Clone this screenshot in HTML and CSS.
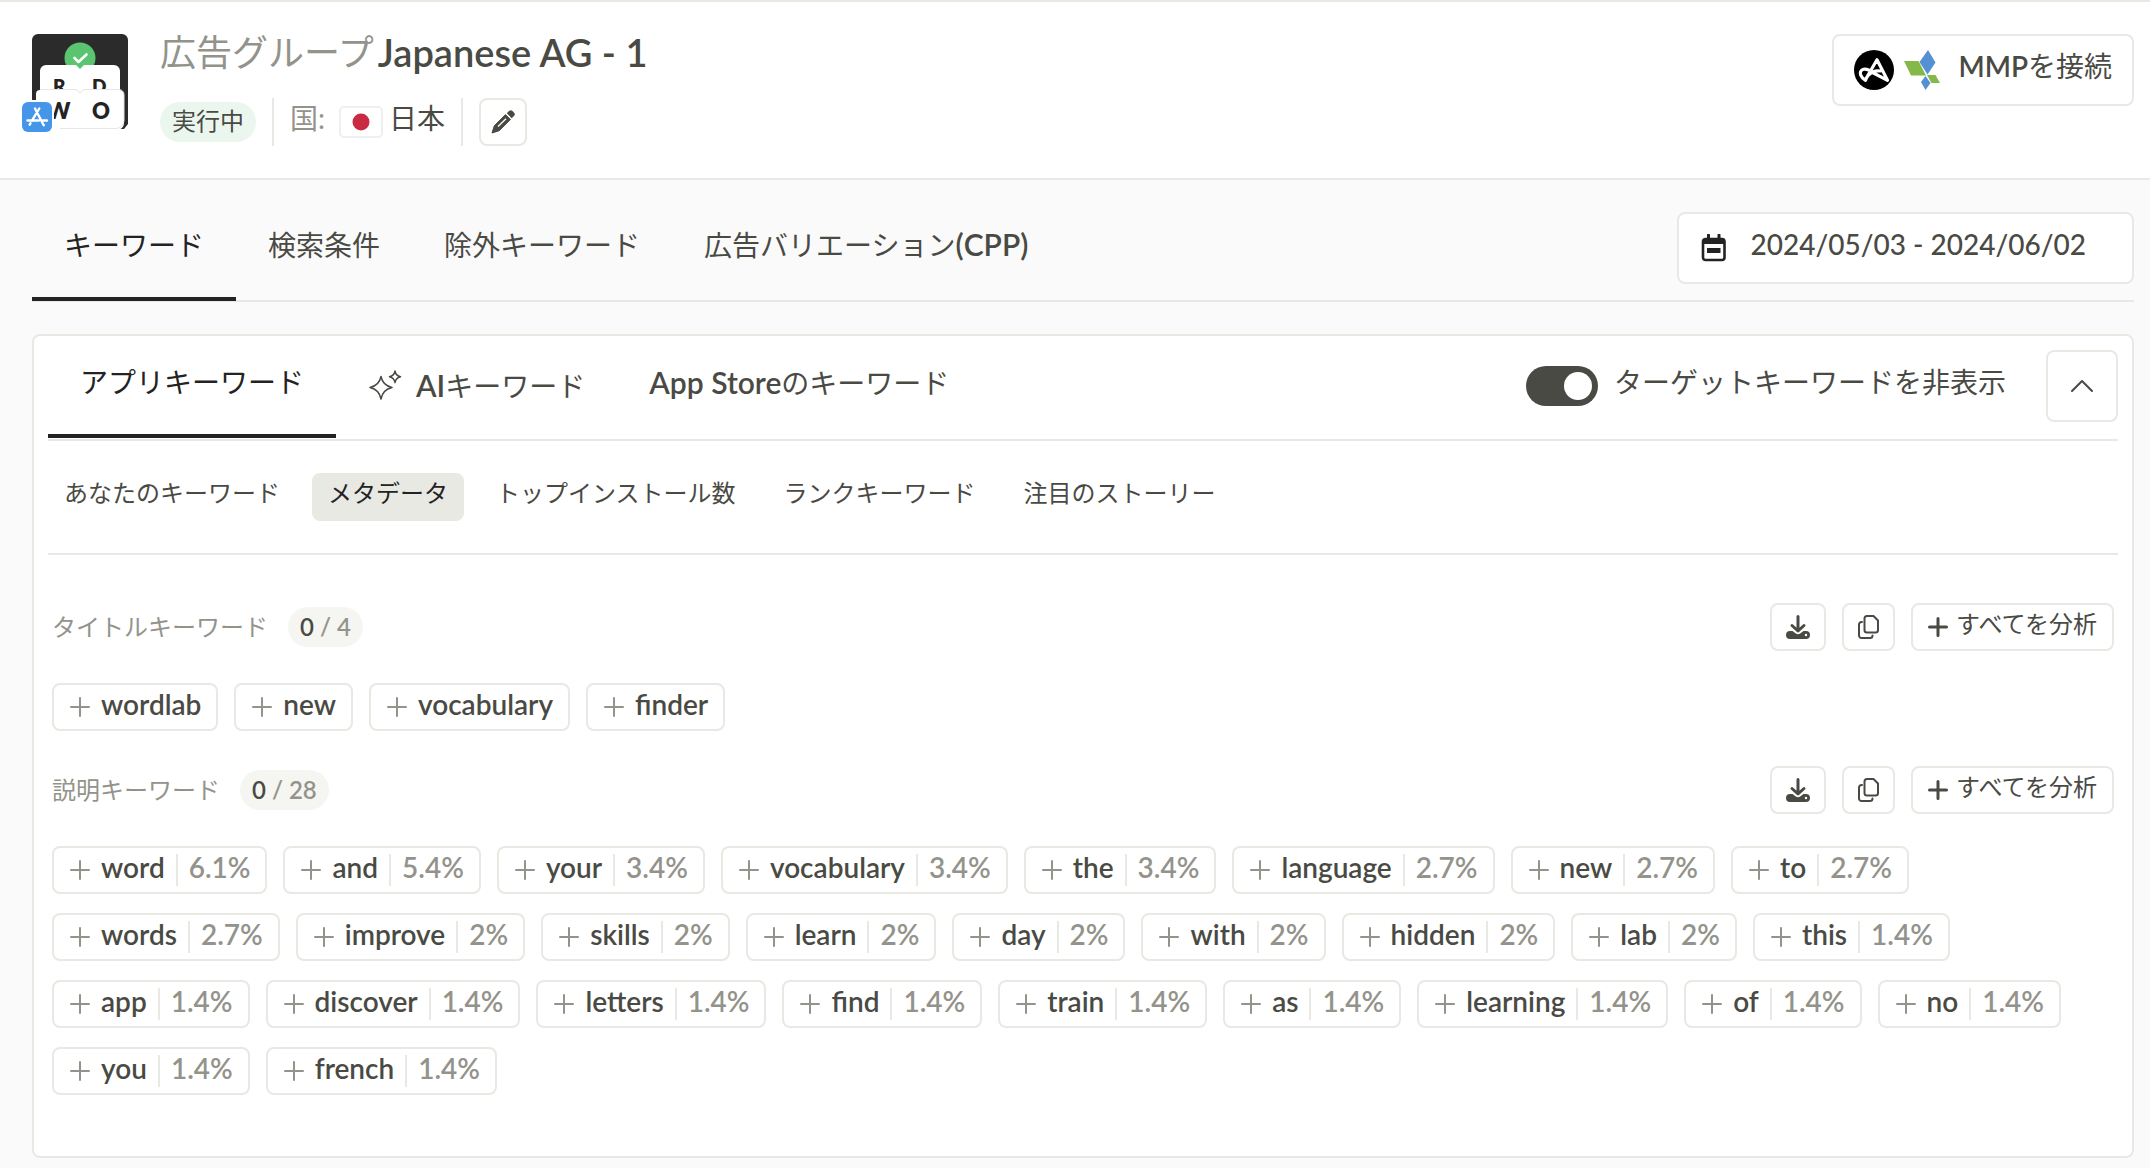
FILE: index.html
```html
<!DOCTYPE html>
<html lang="ja">
<head>
<meta charset="utf-8">
<meta name="viewport" content="width=device-width, initial-scale=1">
<title>広告グループ Japanese AG - 1</title>
<link rel="stylesheet" href="styles.css">
</head>
<body>
<svg class="sprite" aria-hidden="true">
  <symbol id="plus" viewBox="0 0 20 20"><path d="M10 1v18M1 10h18" fill="none" stroke="currentColor" stroke-width="2" stroke-linecap="round"/></symbol>
  <symbol id="plus-bold" viewBox="0 0 20 20"><path d="M10 1.500v17M1.500 10h17" fill="none" stroke="currentColor" stroke-width="3" stroke-linecap="round"/></symbol>
  <symbol id="download" viewBox="0 0 24 24"><path d="M4 16h2.500l3 2.200a4 4 0 0 0 5 0l3-2.200H20a4 4 0 0 1 0 8H4a4 4 0 0 1 0-8zM20 18.800a1.200 1.200 0 1 0 0 2.400 1.200 1.200 0 0 0 0-2.400z" fill="currentColor" fill-rule="evenodd"/><path d="M12 1.500v14M6 10.500l6 5.500 6-5.500" fill="none" stroke="currentColor" stroke-width="3" stroke-linecap="round" stroke-linejoin="round"/></symbol>
  <symbol id="copy" viewBox="0 0 21 24"><path d="M9 1h6.500L20 5.500V15a2.500 2.500 0 0 1-2.500 2.500H9A2.500 2.500 0 0 1 6.500 15V3.500A2.500 2.500 0 0 1 9 1zM4 7h-.5A2.500 2.500 0 0 0 1 9.500v11A2.500 2.500 0 0 0 3.500 23H12a2.500 2.500 0 0 0 2.500-2.500" fill="none" stroke="currentColor" stroke-width="2" stroke-linecap="round" stroke-linejoin="round"/></symbol>
</svg>

<header class="header">
  <div class="app">
    <svg class="app-icon" viewBox="0 0 96 96" aria-hidden="true">
      <path d="M6 0h84a6 6 0 0 1 6 6v84l-4 5H0V6a6 6 0 0 1 6-6z" fill="#2b2b2b"/>
      <circle cx="48" cy="24" r="15.500" fill="#5ac470"/>
      <path d="M42.500 24l4 4 8-7.500" fill="none" stroke="#fff" stroke-width="2.600" stroke-linecap="round" stroke-linejoin="round"/>
      <path d="M14 31h30l4 4 4-4h30a6 6 0 0 1 6 6v30H8V37a6 6 0 0 1 6-6z" fill="#fff"/>
      <g class="tile-text" fill="#232323">
        <text x="21" y="59" font-size="19">R</text>
        <text x="60" y="59" font-size="19">D</text>
      </g>
      <path d="M8 56h36l4 3 4-3h35a5 5 0 0 1 5 5v28a7 7 0 0 1-7 7H0V84l4-2V60a4 4 0 0 1 4-4z" fill="#fff"/>
      <path d="M8 55.500h36l4 3 4-3h35a5 5 0 0 1 5 5v26a8 8 0 0 1-8 8H28" fill="none" stroke="#e6e6e6" stroke-width="1"/>
      <g class="tile-text" fill="#232323">
        <text x="15" y="85" font-size="22">W</text>
        <text x="60" y="85" font-size="22">O</text>
      </g>
    </svg>
    <svg class="store-badge" viewBox="0 0 34 34" aria-hidden="true">
      <rect width="34" height="34" rx="7" fill="#fff"/>
      <rect x="2" y="2" width="30" height="30" rx="6" fill="#4596e9"/>
      <path d="M15 8.500l7.500 14.500M19.300 8.500l-7.500 12.300M7.500 20.500h11.300M23 20.500h4M10.500 23.300l-.8 1.400M23 24l.8 1.200" fill="none" stroke="#fff" stroke-width="2.400" stroke-linecap="round"/>
    </svg>
  </div>
  <div class="heading">
    <h1 class="title"><span class="muted">広告グループ</span><span class="title-name">Japanese AG - 1</span></h1>
    <div class="meta">
      <span class="status">実行中</span>
      <span class="rule"></span>
      <span class="country">
        <span class="muted raised">国:</span>
        <svg class="flag" viewBox="0 0 44 32" role="img" aria-label="日本の国旗"><rect x="1" y="1" width="42" height="30" rx="4" fill="#fff" stroke="#efefef" stroke-width="2"/><circle cx="22" cy="16" r="8.500" fill="#c92c42"/></svg>
        <span class="raised">日本</span>
      </span>
      <span class="rule"></span>
      <button class="edit" type="button" aria-label="編集">
        <svg viewBox="0 0 24 24" width="24" height="24" aria-hidden="true"><path d="M14.500 4.600l4.900 4.900L8.200 20.700 1 23l2.300-7.200z" fill="currentColor" stroke="currentColor" stroke-width="1" stroke-linejoin="round"/><path d="M15.800 3.300L18 1.100a2.500 2.500 0 0 1 3.500 0l1.400 1.400a2.500 2.500 0 0 1 0 3.500l-2.200 2.200z" fill="currentColor"/><path d="M7 16.500L15 8.700" stroke="#fff" stroke-width="1.300"/></svg>
      </button>
    </div>
  </div>
  <button class="box mmp" type="button">
    <svg viewBox="0 0 40 40" width="40" height="40" aria-hidden="true"><circle cx="20" cy="20" r="20" fill="#000"/><path d="M11.500 29.500L23 9.800l10.500 20.500-15-7.800c-3-2.500-6-4-9-3.200-3 .9-3.800 3.400-2.800 5.800 1 2.500 3 4.200 4.800 5.200 1-3 3-6 7-8.200 2.500-1.200 5-1.600 7.800-1.100" fill="none" stroke="#fff" stroke-width="3.200" stroke-linejoin="round" stroke-linecap="round"/></svg>
    <svg viewBox="0 0 36 40" width="36" height="40" aria-hidden="true"><path d="M24 0l7.500 12.500L23.500 24.500 15.500 12z" fill="#5590d2"/><path d="M0 11h14.500L22 25.500H7z" fill="#84b848"/><path d="M23 25h8.500l4.500 8h-8.500z" fill="#84b848"/><path d="M21.500 26l5 7-5 7-4.500-8z" fill="#5590d2"/></svg>
    <span class="mmp-label raised"><span class="latin">MMP</span>を接続</span>
  </button>
</header>

<main class="main">
  <div class="toolbar">
    <nav class="tabs">
      <a class="tab is-active" href="#keywords">キーワード</a>
      <a class="tab" href="#search-terms">検索条件</a>
      <a class="tab" href="#negative">除外キーワード</a>
      <a class="tab" href="#cpp"><span>広告バリエーション<span class="latin">(CPP)</span></span></a>
    </nav>
    <button class="box date" type="button">
      <svg viewBox="0 0 26 28" width="26" height="28" aria-hidden="true"><path d="M7.500 1v5M18 1v5" stroke="#232323" stroke-width="3" stroke-linecap="round"/><rect x="2" y="5" width="21.500" height="21" rx="2.500" fill="none" stroke="#232323" stroke-width="2.600"/><path d="M2 5h21.500v5H2z" fill="#232323"/><rect x="6" y="14" width="13.500" height="5" fill="#232323"/></svg>
      <span class="raised">2024/05/03 - 2024/06/02</span>
    </button>
  </div>

  <section class="card">
    <div class="card-bar">
      <nav class="tabs">
        <a class="tab is-active" href="#app">アプリキーワード</a>
        <a class="tab tab-icon" href="#ai"><svg viewBox="0 0 34 30" width="34" height="30" aria-hidden="true"><path d="M13 6.500c1.200 6 4.500 9.500 11 11-6.500 1.500-9.800 5-11 11.500-1.200-6.500-4.500-10-11-11.500 6.500-1.500 9.800-5 11-11zM27 1c.6 3.200 2.300 5 5.500 5.700-3.200.7-4.900 2.500-5.500 5.800-.6-3.300-2.300-5.100-5.500-5.800C24.700 6 26.400 4.200 27 1z" fill="none" stroke="currentColor" stroke-width="1.500" stroke-linejoin="round"/></svg><span><span class="latin">AI</span>キーワード</span></a>
        <a class="tab" href="#store"><span><span class="latin">App Store</span>のキーワード</span></a>
      </nav>
      <div class="card-tools">
        <label class="switch"><input type="checkbox" checked><span class="raised">ターゲットキーワードを非表示</span></label>
        <button class="box collapse" type="button" aria-label="折りたたむ"><svg viewBox="0 0 24 14" width="24" height="14" aria-hidden="true"><path d="M2 12L12 2l10 10" fill="none" stroke="currentColor" stroke-width="2" stroke-linecap="round" stroke-linejoin="round"/></svg></button>
      </div>
    </div>

    <nav class="subtabs">
      <button class="subtab" type="button">あなたのキーワード</button>
      <button class="subtab is-selected" type="button">メタデータ</button>
      <button class="subtab" type="button">トップインストール数</button>
      <button class="subtab" type="button">ランクキーワード</button>
      <button class="subtab" type="button">注目のストーリー</button>
    </nav>

    <div class="groups">
      <section class="group">
        <div class="group-head">
          <h2 class="group-title">タイトルキーワード</h2>
          <span class="count"><b>0</b> / 4</span>
          <div class="actions">
            <button class="btn" type="button" aria-label="ダウンロード"><svg width="24" height="24"><use href="#download"/></svg></button>
            <button class="btn" type="button" aria-label="コピー"><svg width="21" height="24"><use href="#copy"/></svg></button>
            <button class="btn btn-wide" type="button"><svg width="20" height="20"><use href="#plus-bold"/></svg><span class="raised">すべてを分析</span></button>
          </div>
        </div>
        <div class="chips">
          <button class="chip" type="button"><svg><use href="#plus"/></svg><span>wordlab</span></button>
          <button class="chip" type="button"><svg><use href="#plus"/></svg><span>new</span></button>
          <button class="chip" type="button"><svg><use href="#plus"/></svg><span>vocabulary</span></button>
          <button class="chip" type="button"><svg><use href="#plus"/></svg><span>finder</span></button>
        </div>
      </section>

      <section class="group">
        <div class="group-head">
          <h2 class="group-title">説明キーワード</h2>
          <span class="count"><b>0</b> / 28</span>
          <div class="actions">
            <button class="btn" type="button" aria-label="ダウンロード"><svg width="24" height="24"><use href="#download"/></svg></button>
            <button class="btn" type="button" aria-label="コピー"><svg width="21" height="24"><use href="#copy"/></svg></button>
            <button class="btn btn-wide" type="button"><svg width="20" height="20"><use href="#plus-bold"/></svg><span class="raised">すべてを分析</span></button>
          </div>
        </div>
        <div class="chips">
          <button class="chip" type="button"><svg><use href="#plus"/></svg><span>word</span><i></i><em>6.1%</em></button>
          <button class="chip" type="button"><svg><use href="#plus"/></svg><span>and</span><i></i><em>5.4%</em></button>
          <button class="chip" type="button"><svg><use href="#plus"/></svg><span>your</span><i></i><em>3.4%</em></button>
          <button class="chip" type="button"><svg><use href="#plus"/></svg><span>vocabulary</span><i></i><em>3.4%</em></button>
          <button class="chip" type="button"><svg><use href="#plus"/></svg><span>the</span><i></i><em>3.4%</em></button>
          <button class="chip" type="button"><svg><use href="#plus"/></svg><span>language</span><i></i><em>2.7%</em></button>
          <button class="chip" type="button"><svg><use href="#plus"/></svg><span>new</span><i></i><em>2.7%</em></button>
          <button class="chip" type="button"><svg><use href="#plus"/></svg><span>to</span><i></i><em>2.7%</em></button>
          <button class="chip" type="button"><svg><use href="#plus"/></svg><span>words</span><i></i><em>2.7%</em></button>
          <button class="chip" type="button"><svg><use href="#plus"/></svg><span>improve</span><i></i><em>2%</em></button>
          <button class="chip" type="button"><svg><use href="#plus"/></svg><span>skills</span><i></i><em>2%</em></button>
          <button class="chip" type="button"><svg><use href="#plus"/></svg><span>learn</span><i></i><em>2%</em></button>
          <button class="chip" type="button"><svg><use href="#plus"/></svg><span>day</span><i></i><em>2%</em></button>
          <button class="chip" type="button"><svg><use href="#plus"/></svg><span>with</span><i></i><em>2%</em></button>
          <button class="chip" type="button"><svg><use href="#plus"/></svg><span>hidden</span><i></i><em>2%</em></button>
          <button class="chip" type="button"><svg><use href="#plus"/></svg><span>lab</span><i></i><em>2%</em></button>
          <button class="chip" type="button"><svg><use href="#plus"/></svg><span>this</span><i></i><em>1.4%</em></button>
          <button class="chip" type="button"><svg><use href="#plus"/></svg><span>app</span><i></i><em>1.4%</em></button>
          <button class="chip" type="button"><svg><use href="#plus"/></svg><span>discover</span><i></i><em>1.4%</em></button>
          <button class="chip" type="button"><svg><use href="#plus"/></svg><span>letters</span><i></i><em>1.4%</em></button>
          <button class="chip" type="button"><svg><use href="#plus"/></svg><span>find</span><i></i><em>1.4%</em></button>
          <button class="chip" type="button"><svg><use href="#plus"/></svg><span>train</span><i></i><em>1.4%</em></button>
          <button class="chip" type="button"><svg><use href="#plus"/></svg><span>as</span><i></i><em>1.4%</em></button>
          <button class="chip" type="button"><svg><use href="#plus"/></svg><span>learning</span><i></i><em>1.4%</em></button>
          <button class="chip" type="button"><svg><use href="#plus"/></svg><span>of</span><i></i><em>1.4%</em></button>
          <button class="chip" type="button"><svg><use href="#plus"/></svg><span>no</span><i></i><em>1.4%</em></button>
          <button class="chip" type="button"><svg><use href="#plus"/></svg><span>you</span><i></i><em>1.4%</em></button>
          <button class="chip" type="button"><svg><use href="#plus"/></svg><span>french</span><i></i><em>1.4%</em></button>
        </div>
      </section>
    </div>
  </section>
</main>
</body>
</html>
```
FILE: styles.css
```css
:root {
  --line: #e9e9e3;
  --text: #4a4a44;
  --muted: #93938b;
  --strong: #232323;
}

* { box-sizing: border-box; }

body {
  margin: 0;
  min-height: 100vh;
  background: #fafafa;
  color: var(--text);
  font-family: Lato, "Noto Sans CJK JP", sans-serif;
  font-size: 28px;
  line-height: 40px;
}

button {
  margin: 0;
  padding: 0;
  background: #fff;
  border: 2px solid var(--line);
  border-radius: 8px;
  color: inherit;
  font: inherit;
  white-space: nowrap;
  cursor: pointer;
}

svg { display: block; flex: none; }
h1, h2 { margin: 0; font-weight: 400; }
a { color: inherit; text-decoration: none; }

.sprite { position: absolute; width: 0; height: 0; }
.muted { color: var(--muted); }
.latin { font-weight: 600; }

/* Labels sit slightly above the middle of their row. */
.raised { padding-bottom: 8px; }

/* Header */
.header {
  display: flex;
  align-items: flex-start;
  padding: 32px 16px 32px 32px;
  background: #fff;
  border-top: 2px solid var(--line);
  border-bottom: 2px solid var(--line);
}

.app { position: relative; flex: none; width: 96px; margin-right: 32px; }
.app-icon { width: 96px; height: 96px; }
.tile-text { font-family: Lato, sans-serif; font-weight: 800; }
.store-badge { position: absolute; left: -12px; top: 66px; width: 34px; height: 34px; }

.heading { flex: 1; }
.title {
  display: flex;
  gap: 4px;
  margin-bottom: 28px;
  font-size: 36px;
  line-height: 36px;
}
.title-name { font-size: 38px; font-weight: 600; }

.meta { display: flex; align-items: center; gap: 16px; }
.status {
  padding: 0 12px 2px;
  border-radius: 20px;
  background: #ebf7ee;
  font-size: 24px;
  line-height: 38px;
}
.rule { width: 2px; height: 48px; background: var(--line); }
.country { display: flex; align-items: center; gap: 6px; }
.flag { width: 44px; height: 32px; margin-left: 8px; }
.edit {
  display: flex;
  align-items: center;
  justify-content: center;
  width: 48px;
  height: 48px;
}

.box {
  display: flex;
  align-items: center;
  height: 72px;
}
.mmp { gap: 10px; padding: 0 20px; }
.mmp-label { margin-left: 8px; }

/* Page tabs */
.main { padding: 32px 16px 10px 32px; }

.toolbar, .card-bar {
  display: flex;
  justify-content: space-between;
  border-bottom: 2px solid var(--line);
}
.toolbar { margin-bottom: 32px; }
.date { margin-bottom: 16px; gap: 24px; padding: 0 46px 0 22px; font-weight: 500; }

.tabs { display: flex; }
.tab {
  display: flex;
  align-items: center;
  margin-bottom: -1px;
  padding: 0 32px 20px;
  border-bottom: 4px solid transparent;
  white-space: nowrap;
}
.tab.is-active { border-color: var(--strong); color: var(--strong); }
.tab .latin { font-size: 30px; }

/* Card */
.card {
  padding: 14px;
  background: #fff;
  border: 2px solid var(--line);
  border-radius: 8px;
}
.card-bar .tab { margin-bottom: 1px; }
.card-bar .tab-icon { gap: 14px; padding-bottom: 14px; }
.card-tools { display: flex; gap: 40px; margin-bottom: 17px; }

.switch { display: flex; align-items: center; gap: 16px; cursor: pointer; }
.switch input {
  appearance: none;
  display: flex;
  align-items: center;
  justify-content: flex-end;
  width: 72px;
  height: 40px;
  margin: 0;
  padding: 6px;
  border-radius: 20px;
  background: var(--text);
}
.switch input::before {
  content: "";
  width: 28px;
  height: 28px;
  border-radius: 50%;
  background: #fff;
}
.switch input:not(:checked) { justify-content: flex-start; }
.collapse { justify-content: center; width: 72px; }

.subtabs {
  display: flex;
  gap: 16px;
  padding: 32px 0;
  border-bottom: 2px solid var(--line);
}
.subtab {
  height: 48px;
  padding: 0 16px 8px;
  border: 0;
  font-size: 24px;
}
.subtab.is-selected { background: #e9e9e4; color: var(--strong); }

/* Keyword groups */
.groups {
  display: grid;
  gap: 35px;
  padding: 48px 4px 47px;
}
.group-head {
  display: flex;
  align-items: center;
  margin-bottom: 32px;
  font-size: 24px;
}
.group-title { margin-right: 20px; font-size: 24px; color: var(--muted); }
.count {
  padding: 0 12px;
  border-radius: 20px;
  background: #f5f5f1;
  color: var(--muted);
  font-weight: 600;
}
.count b { color: var(--text); font-weight: 600; }

.actions { display: flex; gap: 16px; margin-left: auto; }
.btn {
  display: flex;
  align-items: center;
  gap: 8px;
  height: 48px;
  padding: 0 14px;
}
.btn-wide { padding: 0 15px; }
.btn .raised { padding-bottom: 6px; }

.chips { display: flex; flex-wrap: wrap; gap: 19px 16px; }
.chip {
  display: flex;
  align-items: center;
  gap: 11px;
  height: 48px;
  padding: 0 15px 0 16px;
  font-size: 28px;
  font-weight: 600;
}
.chip svg { width: 20px; height: 20px; color: var(--muted); }
.chip span, .chip em { padding-bottom: 6px; font-style: normal; }
.chip em { color: var(--muted); }
.chip i { width: 2px; height: 32px; background: var(--line); }
```
